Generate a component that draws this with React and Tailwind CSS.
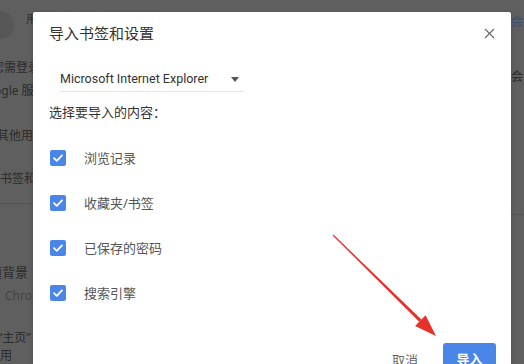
import { X } from 'lucide-react'

const items = ['浏览记录', '收藏夹/书签', '已保存的密码', '搜索引擎']

function Check() {
  return (
    <span className="flex h-[16px] w-[16px] items-center justify-center rounded-[2px] bg-[#4a86e8]">
      <svg width="12" height="12" viewBox="0 0 12 12" fill="none">
        <path d="M2 6.2 L4.8 8.8 L10 3.4" stroke="#fff" strokeWidth="1.8" strokeLinecap="round" strokeLinejoin="round" />
      </svg>
    </span>
  )
}

function Backdrop() {
  // the settings page behind the modal, dimmed
  return (
    <div className="flex h-full text-[12px] leading-[16px] text-[#2b2b2b]">
      <div className="flex w-[33px] flex-col overflow-hidden">
        <div className="flex h-[54px] items-start pt-[11px]">
          <span className="ml-[-14px] h-[28px] w-[28px] shrink-0 rounded-full bg-[#575757]" />
          <span className="ml-[12px] shrink-0 text-[11px]">用户</span>
        </div>
        <div className="ml-[-8px] mt-[10px] whitespace-nowrap">您需登录</div>
        <div className="ml-[-22px] mt-[7px] whitespace-nowrap">Google 服务</div>
        <div className="ml-[-3px] mt-[29px] whitespace-nowrap">其他用户</div>
        <div className="ml-[0px] mt-[27px] whitespace-nowrap">书签和</div>
        <div className="mt-[16px] h-px w-full bg-[#535353]" />
        <div className="ml-[-24px] mt-[60px] whitespace-nowrap text-[13px]">主题背景</div>
        <div className="ml-[5px] mt-[8px] whitespace-nowrap text-[#444]">Chrome</div>
        <div className="ml-[-2px] mt-[26px] whitespace-nowrap">“主页”</div>
        <div className="ml-[0px] mt-[2px] whitespace-nowrap">用</div>
      </div>
      <div className="flex-1" />
      <div className="flex w-[13px] flex-col overflow-hidden">
        <div className="mt-[14px] whitespace-nowrap text-[#3a4f78]">会话</div>
        <div className="mt-[39px] whitespace-nowrap">会话</div>
        <div className="mt-[129px] h-px w-full bg-[#535353]" />
      </div>
    </div>
  )
}

export default function App() {
  return (
    <div
      className="relative h-[364px] w-[524px] overflow-hidden bg-[#5f5f5f]"
      style={{ fontFamily: '"Noto Sans", "Noto Sans CJK SC", sans-serif' }}
    >
      <Backdrop />

      <div className="absolute left-[33px] top-[12px] flex h-[360px] w-[478px] flex-col rounded-t-[2px] bg-white shadow-[0_1px_4px_rgba(0,0,0,0.2)]">
        <div className="flex items-center justify-between pl-[16px] pr-[13px] pt-[11px]">
          <h2 className="text-[15px] leading-[20px] text-[#333]">导入书签和设置</h2>
          <X size={17} strokeWidth={1.6} className="text-[#666]" />
        </div>

        <div className="ml-[27px] mt-[27px] flex w-[185px] items-center justify-between border-b border-[#e4e4e4] pb-[3px] pr-[6px]">
          <span className="text-[12.5px] leading-[18px] text-[#333]" style={{ fontFamily: 'Roboto, "Noto Sans CJK SC", sans-serif' }}>
            Microsoft Internet Explorer
          </span>
          <span className="h-0 w-0 border-x-[4.5px] border-t-[5px] border-x-transparent border-t-[#555]" />
        </div>

        <p className="ml-[16px] mt-[11px] text-[13px] leading-[18px] text-[#333]">选择要导入的内容：</p>

        <div className="mt-[29px] flex flex-col gap-[29px] pl-[17px]">
          {items.map((t) => (
            <div key={t} className="flex items-center">
              <Check />
              <span className="ml-[18px] text-[13px] leading-[16px] text-[#555]">{t}</span>
            </div>
          ))}
        </div>

        <div className="mt-auto flex items-end justify-end gap-[25px] pr-[15px]">
          <span className="mb-[3px] text-[13px] leading-[18px] text-[#666]">取消</span>
          <span className="flex h-[29px] w-[53px] items-start justify-center rounded-[3px] bg-[#4a86e8] pt-[7px] text-[13px] font-bold leading-[18px] text-white">
            导入
          </span>
        </div>
      </div>

      <svg className="pointer-events-none absolute left-0 top-0" width="524" height="364" viewBox="0 0 524 364">
        <polygon points="332.6,235.4 333.4,234.6 421.4,319.5 419.2,321.7" fill="#e8302a" />
        <polygon points="436,336 425.6,315.3 415.1,325.9" fill="#e8302a" />
      </svg>
    </div>
  )
}
